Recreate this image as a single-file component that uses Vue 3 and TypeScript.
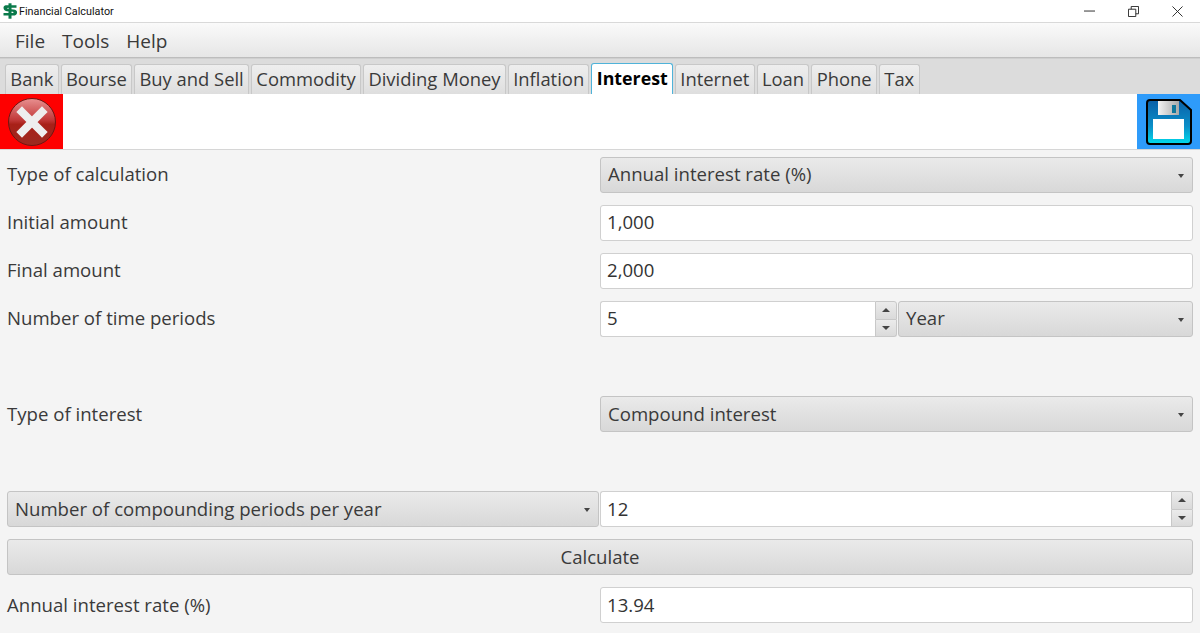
<template>
  <div class="window">
    <div class="titlebar">
      <svg class="app-icon" viewBox="0 0 16 16" width="16" height="16">
        <path d="M1.5 4.5C1.5 2.8 3 2.2 5 2.2h9.5v2.6H6c-.8 0-.9 1 0 1.1l5.5.6c2.4.3 3.6 1.3 3.6 3 0 2-1.5 3.1-3.8 3.1H1.5v-2.6h9.3c1 0 1.1-1.1 0-1.2L4.8 8.2C2.6 7.9 1.5 6.5 1.5 4.5Z" fill="#0b7a4b" />
        <rect x="6.5" y="0.3" width="3" height="15.4" fill="#0b7a4b" />
      </svg>
      <span class="app-title">Financial Calculator</span>
      <div class="window-buttons">
        <svg viewBox="0 0 12 12" width="11" height="11"><path d="M0 5.5h12" stroke="#222" fill="none" /></svg>
        <svg viewBox="0 0 12 12" width="11" height="11"><path d="M.5 3.5h8v8h-8zM3.5 3.5v-3h8v8h-3" stroke="#222" fill="none" /></svg>
        <svg viewBox="0 0 12 12" width="11" height="11"><path d="M.5.5l11 11M11.5.5l-11 11" stroke="#222" fill="none" /></svg>
      </div>
    </div>

    <div class="menubar">
      <span v-for="m in menus" :key="m">{{ m }}</span>
    </div>

    <div class="tabbar">
      <div v-for="t in tabs" :key="t" class="tab" :class="{ active: t === activeTab }">{{ t }}</div>
    </div>

    <div class="toolbar">
      <button class="tool-btn close">
        <svg viewBox="0 0 50 50" width="50" height="50">
          <defs>
            <linearGradient id="redBall" x1="0" y1="0" x2="0" y2="1">
              <stop offset="0" stop-color="#e89090" />
              <stop offset="0.45" stop-color="#c23a3a" />
              <stop offset="0.55" stop-color="#a82018" />
              <stop offset="1" stop-color="#9c2a20" />
            </linearGradient>
          </defs>
          <circle cx="25" cy="25" r="23.5" fill="url(#redBall)" stroke="#6e1612" stroke-width="1" />
          <path d="M15 15L35 35M35 15L15 35" stroke="#eeeeee" stroke-width="8" stroke-linecap="square" fill="none" />
        </svg>
      </button>
      <button class="tool-btn save">
        <svg viewBox="0 0 46 46" width="46" height="46">
          <defs>
            <linearGradient id="disk" x1="0" y1="0" x2="0" y2="1">
              <stop offset="0" stop-color="#0a5fa8" />
              <stop offset="0.6" stop-color="#0a8fc8" />
              <stop offset="1" stop-color="#00dcec" />
            </linearGradient>
            <linearGradient id="shutter" x1="0" y1="0" x2="1" y2="0">
              <stop offset="0" stop-color="#f4f4f4" />
              <stop offset="1" stop-color="#a8a8a8" />
            </linearGradient>
          </defs>
          <path d="M4 1H34L45 11V42a3 3 0 0 1-3 3H4a3 3 0 0 1-3-3V4a3 3 0 0 1 3-3Z" fill="url(#disk)" stroke="#000" stroke-width="2" />
          <rect x="12" y="2" width="21" height="14" fill="url(#shutter)" />
          <rect x="26" y="6" width="4" height="8" fill="#11789c" />
          <rect x="7" y="20" width="31" height="20" fill="#fff" />
        </svg>
      </button>
    </div>

    <div class="form">
      <label>Type of calculation</label>
      <div class="combo">Annual interest rate (%)<i class="caret"></i></div>

      <label>Initial amount</label>
      <div class="field">1,000</div>

      <label>Final amount</label>
      <div class="field">2,000</div>

      <label>Number of time periods</label>
      <div class="split">
        <div class="spinner">
          <div class="field">5</div>
          <div class="spin-btns"><b class="up"></b><b class="down"></b></div>
        </div>
        <div class="combo">Year<i class="caret"></i></div>
      </div>

      <div class="blank"></div>

      <label class="lower">Type of interest</label>
      <div class="combo lower">Compound interest<i class="caret"></i></div>

      <div class="blank"></div>

      <div class="combo wide lower">Number of compounding periods per year<i class="caret"></i></div>
      <div class="spinner">
        <div class="field lower">12</div>
        <div class="spin-btns"><b class="up"></b><b class="down"></b></div>
      </div>

      <button class="calc lower">Calculate</button>

      <label class="lower">Annual interest rate (%)</label>
      <div class="field lower">13.94</div>
    </div>
  </div>
</template>

<script setup lang="ts">
const menus = ["File", "Tools", "Help"];
const tabs = [
  "Bank",
  "Bourse",
  "Buy and Sell",
  "Commodity",
  "Dividing Money",
  "Inflation",
  "Interest",
  "Internet",
  "Loan",
  "Phone",
  "Tax",
];
const activeTab = "Interest";
</script>

<style>
html,
body {
  margin: 0;
  overflow: hidden;
}
</style>

<style scoped>
.window {
  width: 1200px;
  height: 633px;
  overflow: hidden;
  background: #f4f4f4;
  font-family: "Open Sans", "Noto Sans", sans-serif;
  font-size: 18.6px;
  color: #3a3a3a;
}
.titlebar {
  height: 22px;
  background: #fff;
  display: flex;
  align-items: center;
  padding-left: 2px;
  border-bottom: 1px solid #d9d9d9;
}
.app-title {
  margin-left: 1px;
  font-family: Roboto, sans-serif;
  font-size: 10.8px;
  color: #111;
}
.window-buttons {
  margin-left: auto;
  margin-right: 17px;
  display: flex;
  gap: 33px;
  align-items: center;
}
.menubar {
  height: 34px;
  display: flex;
  align-items: center;
  gap: 17px;
  padding-left: 15px;
  background: linear-gradient(#fafafa, #e6e6e6);
  border-bottom: 1px solid #bdbdbd;
  font-size: 19px;
}
.menubar span {
  padding-top: 1px;
}
.tabbar {
  height: 36px;
  box-sizing: border-box;
  background: #dcdcdc;
  display: flex;
  align-items: flex-end;
  gap: 2px;
  padding-left: 5px;
  border-top: 1px solid #cfcfcf;
}
.tab {
  height: 30px;
  box-sizing: border-box;
  padding: 0 4.3px 2px;
  display: flex;
  align-items: center;
  background: linear-gradient(#eeeeee, #dedede);
  border: 1px solid #c8c8c8;
  border-bottom: none;
  border-radius: 3px 3px 0 0;
  font-size: 18.4px;
  white-space: nowrap;
}
.tab.active {
  height: 31px;
  background: #fff;
  border: 1px solid #4fb3d9;
  border-bottom: none;
  color: #000;
  font-size: 17.8px;
  font-weight: 700;
}
.toolbar {
  height: 56px;
  box-sizing: border-box;
  background: #fff;
  display: flex;
  justify-content: space-between;
  border-bottom: 1px solid #d6d6d6;
}
.tool-btn {
  padding: 0;
  border: 0;
  width: 63px;
  height: 55px;
  display: flex;
  align-items: center;
  justify-content: center;
}
.tool-btn.close {
  background: #fe0000;
}
.tool-btn.save {
  background: #2e9bfa;
}
.form {
  display: grid;
  grid-template-columns: 586px 593px;
  column-gap: 7px;
  row-gap: 12px;
  padding: 7px 7px 0;
}
.form label {
  display: flex;
  align-items: center;
  padding-bottom: 3px;
}
.blank {
  grid-column: 1 / -1;
  height: 35px;
}
.combo {
  position: relative;
  display: flex;
  align-items: center;
  box-sizing: border-box;
  height: 36px;
  padding: 0 0 3px 7px;
  background: linear-gradient(#eaeaea, #d8d8d8);
  border: 1px solid #c4c4c4;
  border-radius: 3px;
  flex: 1;
}
.combo.wide {
  margin-right: -6px;
}
.caret {
  position: absolute;
  right: 8px;
  top: 16px;
  border-left: 3.5px solid transparent;
  border-right: 3.5px solid transparent;
  border-top: 4px solid #444;
}
.field {
  display: flex;
  align-items: center;
  box-sizing: border-box;
  height: 36px;
  padding: 0 0 3px 6px;
  background: #fff;
  border: 1px solid #d0d0d0;
  border-radius: 3px;
  flex: 1;
  color: #333;
}
.form .lower {
  padding-bottom: 1px;
}
.split {
  display: flex;
  gap: 1px;
}
.split .spinner {
  width: 297px;
  flex: none;
}
.spinner {
  display: flex;
}
.spinner .field {
  border-radius: 3px 0 0 3px;
  border-right: none;
}
.spin-btns {
  width: 22px;
  flex: none;
  display: flex;
  flex-direction: column;
}
.spin-btns b {
  flex: 1;
  display: flex;
  align-items: center;
  justify-content: center;
  background: linear-gradient(#ebebeb, #dadada);
  border: 1px solid #c8c8c8;
}
.spin-btns .up {
  border-radius: 0 3px 0 0;
}
.spin-btns .down {
  border-top: none;
  border-radius: 0 0 3px 0;
}
.spin-btns .up::after {
  content: "";
  border-left: 4px solid transparent;
  border-right: 4px solid transparent;
  border-bottom: 4px solid #444;
}
.spin-btns .down::after {
  content: "";
  border-left: 4px solid transparent;
  border-right: 4px solid transparent;
  border-top: 4px solid #444;
}
.calc {
  grid-column: 1 / -1;
  height: 36px;
  padding: 0 0 3px;
  background: linear-gradient(#eaeaea, #d8d8d8);
  border: 1px solid #c4c4c4;
  border-radius: 3px;
  font: inherit;
  color: #3a3a3a;
}
</style>
